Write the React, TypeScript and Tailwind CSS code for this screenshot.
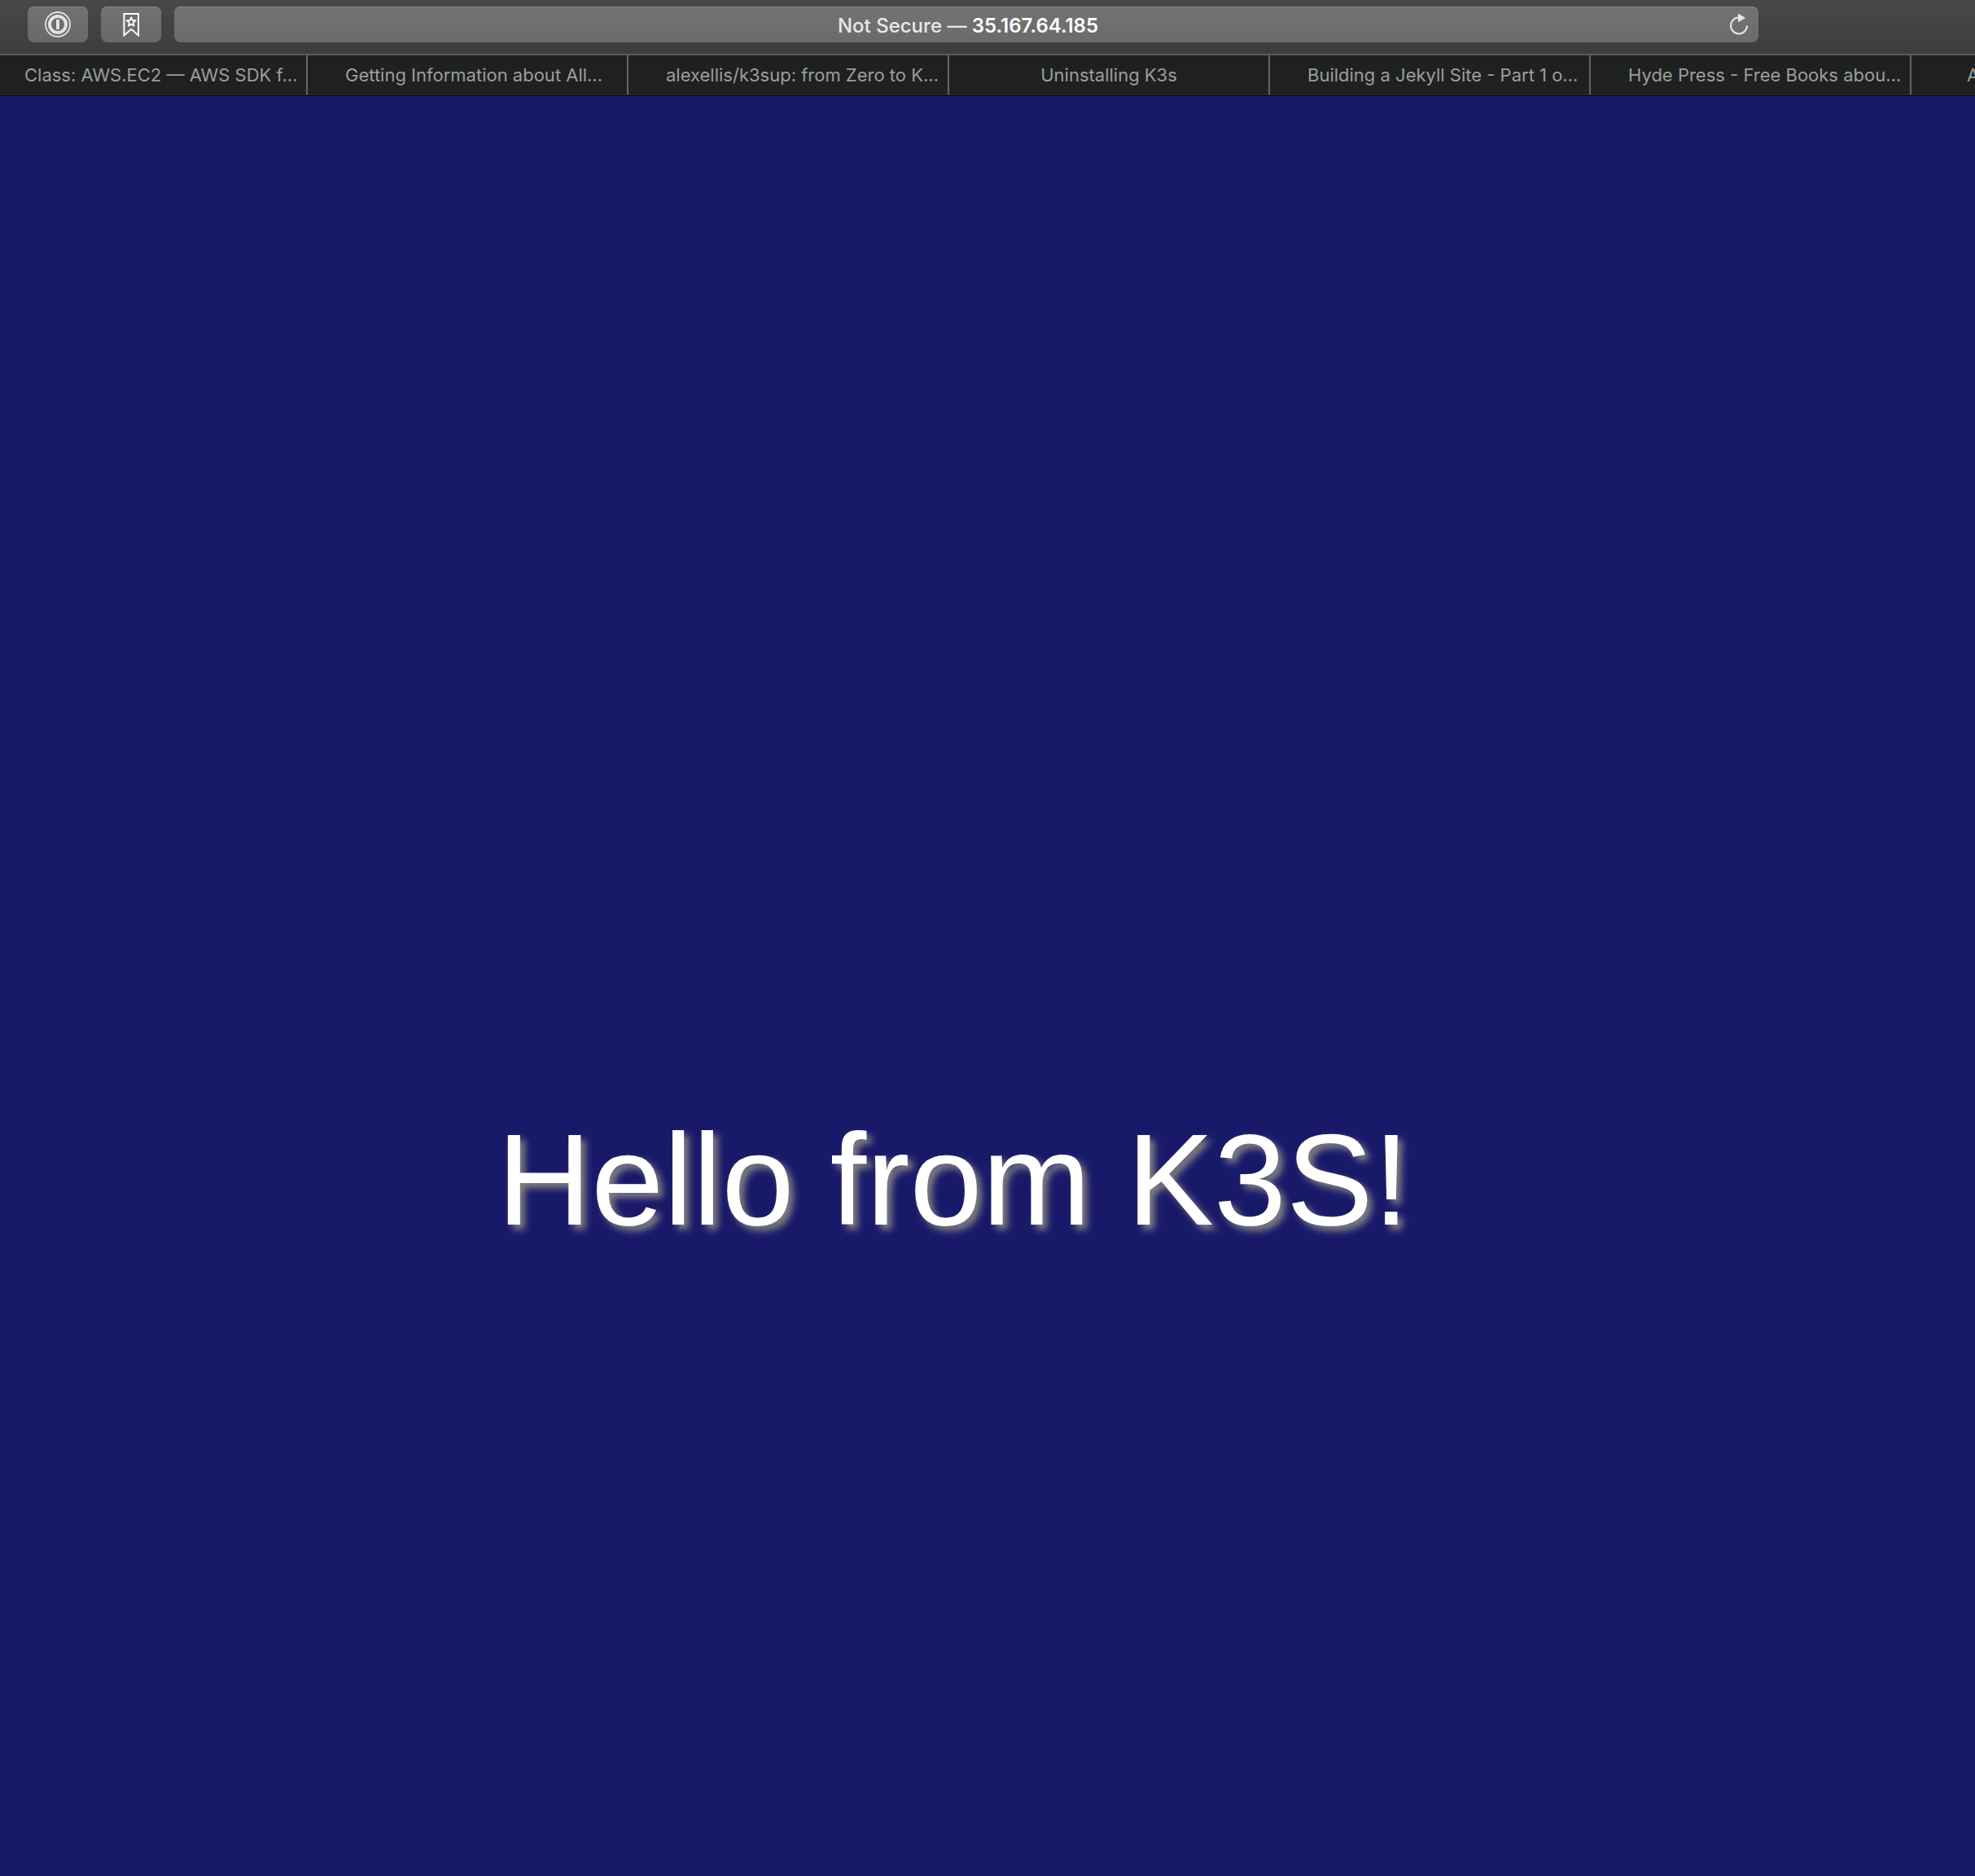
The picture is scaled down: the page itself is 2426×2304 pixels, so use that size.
import type { ReactNode } from 'react';

const leftTabs = [
  'Getting Information about All…',
  'alexellis/k3sup: from Zero to K…',
];
const rightTabs = [
  'Building a Jekyll Site - Part 1 o…',
  'Hyde Press - Free Books abou…',
];

function PasswordIcon() {
  return (
    <svg width="32" height="32" viewBox="0 0 32 32" fill="none" stroke="#e2e2e2" aria-hidden="true">
      <circle cx="16" cy="16" r="15" strokeWidth="1.8" />
      <circle cx="16" cy="16" r="10" strokeWidth="4" />
      <path d="M16 10v12" strokeWidth="4" />
    </svg>
  );
}

function BookmarkIcon() {
  return (
    <svg width="20" height="30" viewBox="0 0 20 30" fill="none" stroke="#ffffff" strokeWidth="2" aria-hidden="true">
      <path d="M1.4 2h17.6v26.4l-8.8-7.6-8.8 7.6z" />
      <path d="M10.2 6.4l1.5 3.6 3.9.3-3 2.6.9 3.8-3.3-2-3.3 2 .9-3.8-3-2.6 3.9-.3z" strokeWidth="1.9" strokeLinejoin="round" />
    </svg>
  );
}

function ReloadIcon() {
  return (
    <svg width="24" height="28" viewBox="0 0 24 28" fill="none" aria-hidden="true">
      <path d="M22 15.5A10 10 0 1 1 12 5.5" stroke="#e6e6e6" strokeWidth="2" />
      <path d="M11 .5v11l9-5.5z" fill="#e6e6e6" />
    </svg>
  );
}

function ToolButton({ label, children }: { label: string; children: ReactNode }) {
  return (
    <button
      type="button"
      aria-label={label}
      className="flex h-11 w-[74px] shrink-0 items-center justify-center rounded-lg bg-linear-to-b from-[#717273] to-[#68696a] shadow-[inset_0_1px_#848586]"
    >
      {children}
    </button>
  );
}

function Tab({ label, className }: { label: string; className: string }) {
  return (
    <a
      href="#"
      className={`flex h-full shrink-0 items-center overflow-hidden whitespace-nowrap border-r-2 border-[#636465] ${className}`}
    >
      {label}
    </a>
  );
}

export default function App() {
  return (
    <div className="flex min-h-screen flex-col overflow-hidden bg-[#19196a] font-['Inter','Liberation_Sans',sans-serif]">
      <header className="border-b border-black">
        <div className="flex h-[68px] items-start gap-4 border-b-2 border-[#58595a] bg-linear-to-b from-[#474849] to-[#3c3d3f] pt-2 pr-[266px] pl-[34px]">
          <ToolButton label="1Password">
            <PasswordIcon />
          </ToolButton>
          <ToolButton label="Bookmarks">
            <BookmarkIcon />
          </ToolButton>
          <div className="flex h-11 min-w-0 flex-1 items-center rounded-lg bg-linear-to-b from-[#727473] to-[#6a6c6b] pr-3 pl-10 shadow-[inset_0_1px_#868787]">
            <button type="button" className="flex-1 pt-1 text-2xl font-medium text-[#e8e8e8]">
              Not Secure — <span className="font-semibold text-white">35.167.64.185</span>
            </button>
            <button type="button" aria-label="Reload this page">
              <ReloadIcon />
            </button>
          </div>
        </div>
        <nav
          aria-label="Tabs"
          className="flex h-[49px] overflow-hidden border-b border-[#2e3030] bg-[#1f2121] text-[22px] leading-7 text-[#9c9d9d]"
        >
          <Tab label="Class: AWS.EC2 — AWS SDK f…" className="w-[378px] pl-[30px]" />
          {leftTabs.map((label) => (
            <Tab key={label} label={label} className="w-[394px] pl-[46px]" />
          ))}
          <Tab label="Uninstalling K3s" className="w-[394px] justify-center" />
          {rightTabs.map((label) => (
            <Tab key={label} label={label} className="w-[394px] pl-[46px]" />
          ))}
          <Tab label="A" className="w-[394px] pl-[68px]" />
        </nav>
      </header>
      <main className="flex flex-1 items-start justify-center pt-[1239px] pr-[84px]">
        <h1 className="font-['Liberation_Sans',Arial,sans-serif] text-[160px] leading-[184px] whitespace-nowrap text-white [text-shadow:6px_6px_8px_#808080]">
          Hello from K3S!
        </h1>
      </main>
    </div>
  );
}
